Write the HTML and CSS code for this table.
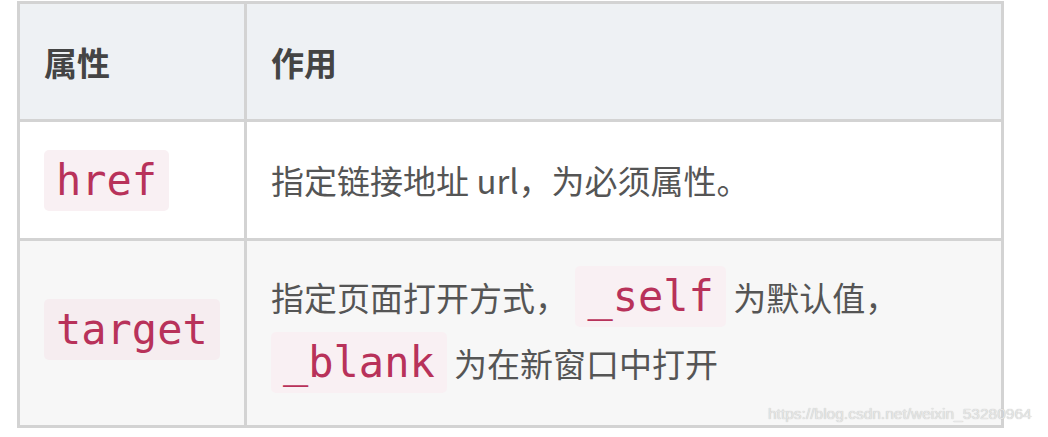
FILE: index.html
```html
<!DOCTYPE html>
<html lang="zh-CN">
<head>
    <meta charset="UTF-8">
    <meta name="viewport" content="width=device-width, initial-scale=1.0">
    <title>a 标签属性</title>
    <link rel="stylesheet" href="styles.css">
</head>
<body>
    <div class="page">
        <table class="attr-table">
            <thead>
                <tr>
                    <th class="col-name">属性</th>
                    <th>作用</th>
                </tr>
            </thead>
            <tbody>
                <tr class="row-href">
                    <td><code>href</code></td>
                    <td>指定链接地址 url，为必须属性。</td>
                </tr>
                <tr class="row-target">
                    <td><code>target</code></td>
                    <td>指定页面打开方式， <code>_self</code> 为默认值，<br><code>_blank</code> 为在新窗口中打开</td>
                </tr>
            </tbody>
        </table>
        <span class="watermark">https://blog.csdn.net/weixin_53280964</span>
    </div>
</body>
</html>
```

FILE: styles.css
```css
body { margin: 0; background: #fff; font-family: "Noto Sans CJK SC", "Noto Sans", sans-serif; }
.page { position: relative; width: 1048px; height: 437px; padding-top: 1px; box-sizing: border-box; }
.attr-table { margin-left: 17px; width: 987px; border-collapse: collapse; color: #555; font-size: 33px; }
.attr-table th, .attr-table td { border: 3px solid #d3d3d3; padding: 0 0 0 24px; text-align: left; vertical-align: middle; }
.attr-table th { background: #eef1f4; color: #444; font-weight: bold; height: 115px; }
.col-name { width: 200px; }
.row-href td { background: #fff; height: 116px; }
.row-target td { background: #f7f7f7; height: 178px; padding-bottom: 6px; line-height: 66px; }
code {
    font-family: "DejaVu Sans Mono", monospace;
    font-size: 42px;
    color: #b8325a;
    background: #f9f0f3;
    padding: 6px 12px;
    border-radius: 5px;
}
.row-target td:first-child code { background: #f6edf0; }
.watermark {
    position: absolute;
    left: 768px;
    top: 405px;
    font-family: "Liberation Sans", Arial, sans-serif;
    font-size: 15.5px;
    color: #e6e6e6;
    text-shadow: 0 0 1px #b5b5b5;
}
```
